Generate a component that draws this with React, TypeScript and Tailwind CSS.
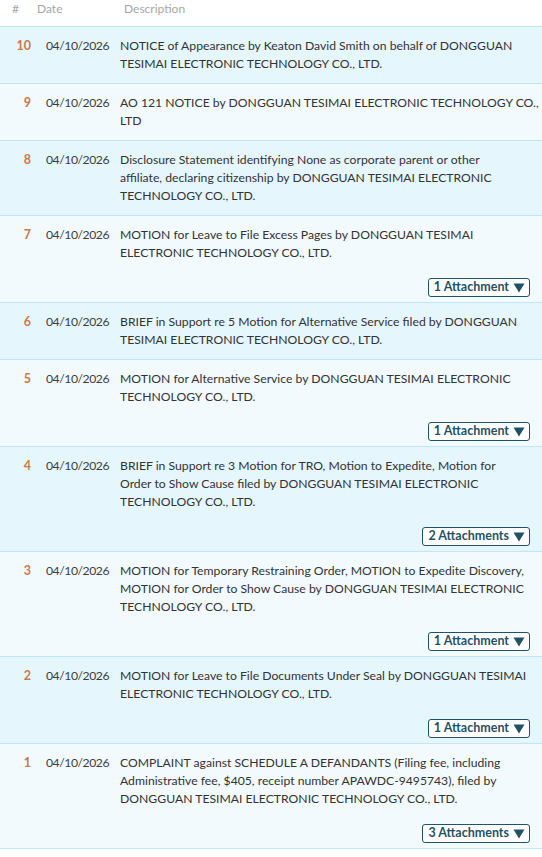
type Entry = {
  num: number;
  lines: string[];
  attachments?: number;
};

const entries: Entry[] = [
  {
    num: 10,
    lines: [
      "NOTICE of Appearance by Keaton David Smith on behalf of DONGGUAN",
      "TESIMAI ELECTRONIC TECHNOLOGY CO., LTD.",
    ],
  },
  {
    num: 9,
    lines: [
      "AO 121 NOTICE by DONGGUAN TESIMAI ELECTRONIC TECHNOLOGY CO.,",
      "LTD",
    ],
  },
  {
    num: 8,
    lines: [
      "Disclosure Statement identifying None as corporate parent or other",
      "affiliate, declaring citizenship by DONGGUAN TESIMAI ELECTRONIC",
      "TECHNOLOGY CO., LTD.",
    ],
  },
  {
    num: 7,
    lines: [
      "MOTION for Leave to File Excess Pages by DONGGUAN TESIMAI",
      "ELECTRONIC TECHNOLOGY CO., LTD.",
    ],
    attachments: 1,
  },
  {
    num: 6,
    lines: [
      "BRIEF in Support re 5 Motion for Alternative Service filed by DONGGUAN",
      "TESIMAI ELECTRONIC TECHNOLOGY CO., LTD.",
    ],
  },
  {
    num: 5,
    lines: [
      "MOTION for Alternative Service by DONGGUAN TESIMAI ELECTRONIC",
      "TECHNOLOGY CO., LTD.",
    ],
    attachments: 1,
  },
  {
    num: 4,
    lines: [
      "BRIEF in Support re 3 Motion for TRO, Motion to Expedite, Motion for",
      "Order to Show Cause filed by DONGGUAN TESIMAI ELECTRONIC",
      "TECHNOLOGY CO., LTD.",
    ],
    attachments: 2,
  },
  {
    num: 3,
    lines: [
      "MOTION for Temporary Restraining Order, MOTION to Expedite Discovery,",
      "MOTION for Order to Show Cause by DONGGUAN TESIMAI ELECTRONIC",
      "TECHNOLOGY CO., LTD.",
    ],
    attachments: 1,
  },
  {
    num: 2,
    lines: [
      "MOTION for Leave to File Documents Under Seal by DONGGUAN TESIMAI",
      "ELECTRONIC TECHNOLOGY CO., LTD.",
    ],
    attachments: 1,
  },
  {
    num: 1,
    lines: [
      "COMPLAINT against SCHEDULE A DEFANDANTS (Filing fee, including",
      "Administrative fee, $405, receipt number APAWDC-9495743), filed by",
      "DONGGUAN TESIMAI ELECTRONIC TECHNOLOGY CO., LTD.",
    ],
    attachments: 3,
  },
];

const DocketRow = ({ entry, odd }: { entry: Entry; odd: boolean }) => {
  return (
    <div
      className={`flex border-b border-[#bfe7f7] pt-[10px] ${
        entry.attachments ? "pb-[5px]" : "pb-[10px]"
      } ${odd ? "bg-[#e6f6fd]" : "bg-[#f2fafe]"}`}
    >
      <div className="w-[31px] shrink-0 text-right font-bold text-[#c9794b] text-[12.5px]">
        {entry.num}
      </div>
      <div className="ml-[15px] w-[74px] shrink-0 text-[#3d3d3d] tracking-[-0.45px]">
        04/10/2026
      </div>
      <div className="w-[410px] shrink-0 flex flex-col">
        <div className="text-[#333]">
          {entry.lines.map((l, i) => (
            <div key={i} className="whitespace-nowrap">
              {l}
            </div>
          ))}
        </div>
        {entry.attachments && (
          <div className="flex justify-end mt-[16px]">
            <button className="h-[19px] flex items-center gap-[4px] pl-[5px] pr-[4px] rounded-[3px] border-[1.5px] border-[#1f5266] bg-white text-[#1f5266] text-[12.5px] font-bold leading-none">
              {entry.attachments} {entry.attachments > 1 ? "Attachments" : "Attachment"}
              <svg width="12" height="10" viewBox="0 0 12 10">
                <path d="M0.5 0.5 H11.5 L6 9.5 Z" fill="#1f5266" />
              </svg>
            </button>
          </div>
        )}
      </div>
    </div>
  );
};

const App = () => {
  return (
    <div
      className="w-[542px] min-h-[857px] bg-white text-[12.2px] leading-[18px]"
      style={{ fontFamily: "Lato, 'Open Sans', sans-serif" }}
    >
      <div className="h-[27px] flex items-start border-b border-[#bfe7f7] text-[12px] text-[#a6a6a6]">
        <span className="ml-[12px] w-[25px]">#</span>
        <span className="w-[87px]">Date</span>
        <span>Description</span>
      </div>
      {entries.map((e, i) => (
        <DocketRow key={e.num} entry={e} odd={i % 2 === 0} />
      ))}
    </div>
  );
};

export default App;
